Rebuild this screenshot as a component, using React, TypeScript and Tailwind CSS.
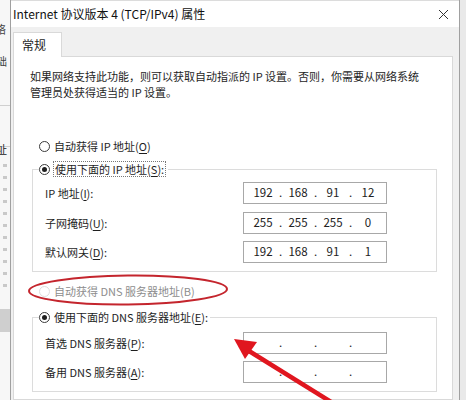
import React from "react";

const Radio = ({ checked, disabled }: { checked?: boolean; disabled?: boolean }) => (
  <span
    className={`w-[11px] h-[11px] rounded-full border bg-white flex items-center justify-center shrink-0 ${
      disabled ? "border-[#dedede]" : "border-[#3a3a3a]"
    }`}
  >
    {checked && <span className="w-[5px] h-[5px] rounded-full bg-[#1e1e1e]" />}
  </span>
);

const IpBox = ({ octets }: { octets?: string[] }) => {
  const vals = octets ?? ["", "", "", ""];
  return (
    <div className="w-[144px] h-[22px] border border-[#a8a8a8] bg-white flex items-center pl-[4px] text-[11.5px] text-[#222]">
      {vals.map((v, i) => (
        <React.Fragment key={i}>
          <span className="w-[30px] text-center">{v}</span>
          {i < 3 && <span className="w-[5px] text-center">.</span>}
        </React.Fragment>
      ))}
    </div>
  );
};

const Row = ({ label, box, className = "" }: { label: React.ReactNode; box?: string[]; className?: string }) => (
  <div className={`flex items-center h-[22px] ${className}`}>
    <span className="w-[198px]">{label}</span>
    <IpBox octets={box} />
  </div>
);

const U = ({ children }: { children: React.ReactNode }) => <span className="underline underline-offset-2">{children}</span>;

export default function App() {
  return (
    <div className="relative w-[466px] h-[400px] overflow-hidden bg-white flex font-['Noto_Sans_CJK_SC','Noto_Sans',sans-serif] text-[11px] text-[#1e1e1e]">
      {/* window behind the dialog */}
      <div className="w-[10px] h-full bg-[#f7f7f7] flex flex-col text-[11px] text-[#444] overflow-hidden">
        <span className="mt-[22px] -ml-[5px] leading-[14px]">络</span>
        <span className="mt-[18px] -ml-[4px] leading-[14px]">础</span>
        <div className="mt-[37px] h-px bg-[#d0d0d0]" />
        <div className="mt-[40px] h-px bg-[#d0d0d0]" />
        <span className="mt-[-5px] -ml-[4px] leading-[14px] text-[#222]">址</span>
        <div className="mt-[8px] ml-[3px] flex flex-col gap-[9px]">
          {Array.from({ length: 11 }).map((_, i) => (
            <span key={i} className="w-[4px] h-[3px] bg-[#c9c9c9]" />
          ))}
        </div>
        <div className="mt-[22px] h-[23px] bg-[#cfcfcf]" />
      </div>

      {/* dialog */}
      <div className="w-[450px] h-full border-l border-r border-[#a0a0a0] flex flex-col">
        <div className="h-[27px] bg-white border-t border-[#dcdcdc] flex items-center justify-between pl-[2px] pr-[10px] text-[12px] text-[#111]">
          <span>Internet 协议版本 4 (TCP/IPv4) 属性</span>
          <svg width="11" height="11" viewBox="0 0 11 11">
            <path d="M1 1 L10 10 M10 1 L1 10" stroke="#333" strokeWidth="1" />
          </svg>
        </div>

        <div className="flex-1 bg-[#f0f0f0] pl-[2px] pr-[6px] pt-[5px] flex flex-col">
          <div className="w-[49px] h-[25px] bg-white border border-b-0 border-[#d9d9d9] -mb-px relative z-10 flex items-center pl-[8px] text-[12px]">
            常规
          </div>
          <div className="flex-1 bg-white border border-[#d9d9d9] flex flex-col">
            <div className="pl-[16px] pt-[11px] leading-[16px]">
              <p>如果网络支持此功能，则可以获取自动指派的 IP 设置。否则，你需要从网络系统</p>
              <p>管理员处获得适当的 IP 设置。</p>
            </div>

            <div className="mt-[38px] ml-[25px] h-[16px] flex items-center gap-[4px]">
              <Radio />
              <span>
                自动获得 IP 地址(<U>O</U>)
              </span>
            </div>

            <div className="mt-[15px] ml-[18px] mr-[15px] border border-[#dcdcdc] pl-[12px] pb-[8px]">
              <div className="-mt-[9px] -ml-[6px] h-[16px] w-fit bg-white flex items-center gap-[3px] pr-[2px]">
                <Radio checked />
                <span className="border border-dotted border-[#777] px-[1px] leading-[14px]">
                  使用下面的 IP 地址(<U>S</U>):
                </span>
              </div>
              <Row className="mt-[5px]" label={<>IP 地址(<U>I</U>):</>} box={["192", "168", "91", "12"]} />
              <Row className="mt-[8px]" label={<>子网掩码(<U>U</U>):</>} box={["255", "255", "255", "0"]} />
              <Row className="mt-[7px]" label={<>默认网关(<U>D</U>):</>} box={["192", "168", "91", "1"]} />
            </div>

            <div className="mt-[11px] ml-[25px] h-[16px] flex items-center gap-[4px] text-[#8d8d8d]">
              <Radio disabled />
              <span>自动获得 DNS 服务器地址(B)</span>
            </div>

            <div className="mt-[18px] ml-[18px] mr-[15px] border border-[#dcdcdc] pl-[12px] pb-[8px]">
              <div className="-mt-[9px] -ml-[6px] h-[16px] w-fit bg-white flex items-center gap-[4px] pr-[2px]">
                <Radio checked />
                <span>
                  使用下面的 DNS 服务器地址(<U>E</U>):
                </span>
              </div>
              <Row className="mt-[7px]" label={<>首选 DNS 服务器(<U>P</U>):</>} />
              <Row className="mt-[7px]" label={<>备用 DNS 服务器(<U>A</U>):</>} />
            </div>
          </div>
        </div>
      </div>

      <div className="flex-1 h-full bg-[#e9e9e9]" />

      {/* red annotations drawn over the screenshot */}
      <svg className="absolute left-0 top-0 pointer-events-none" width="466" height="400" viewBox="0 0 466 400">
        <ellipse cx="128" cy="290" rx="99" ry="14.5" fill="none" stroke="#c4252d" strokeWidth="2" transform="rotate(-0.6 128 290)" />
        <line x1="249" y1="351" x2="336" y2="405" stroke="#e0161f" strokeWidth="4.5" />
        <polygon points="234,339 257,342 245,359" fill="#e0161f" />
      </svg>
    </div>
  );
}
